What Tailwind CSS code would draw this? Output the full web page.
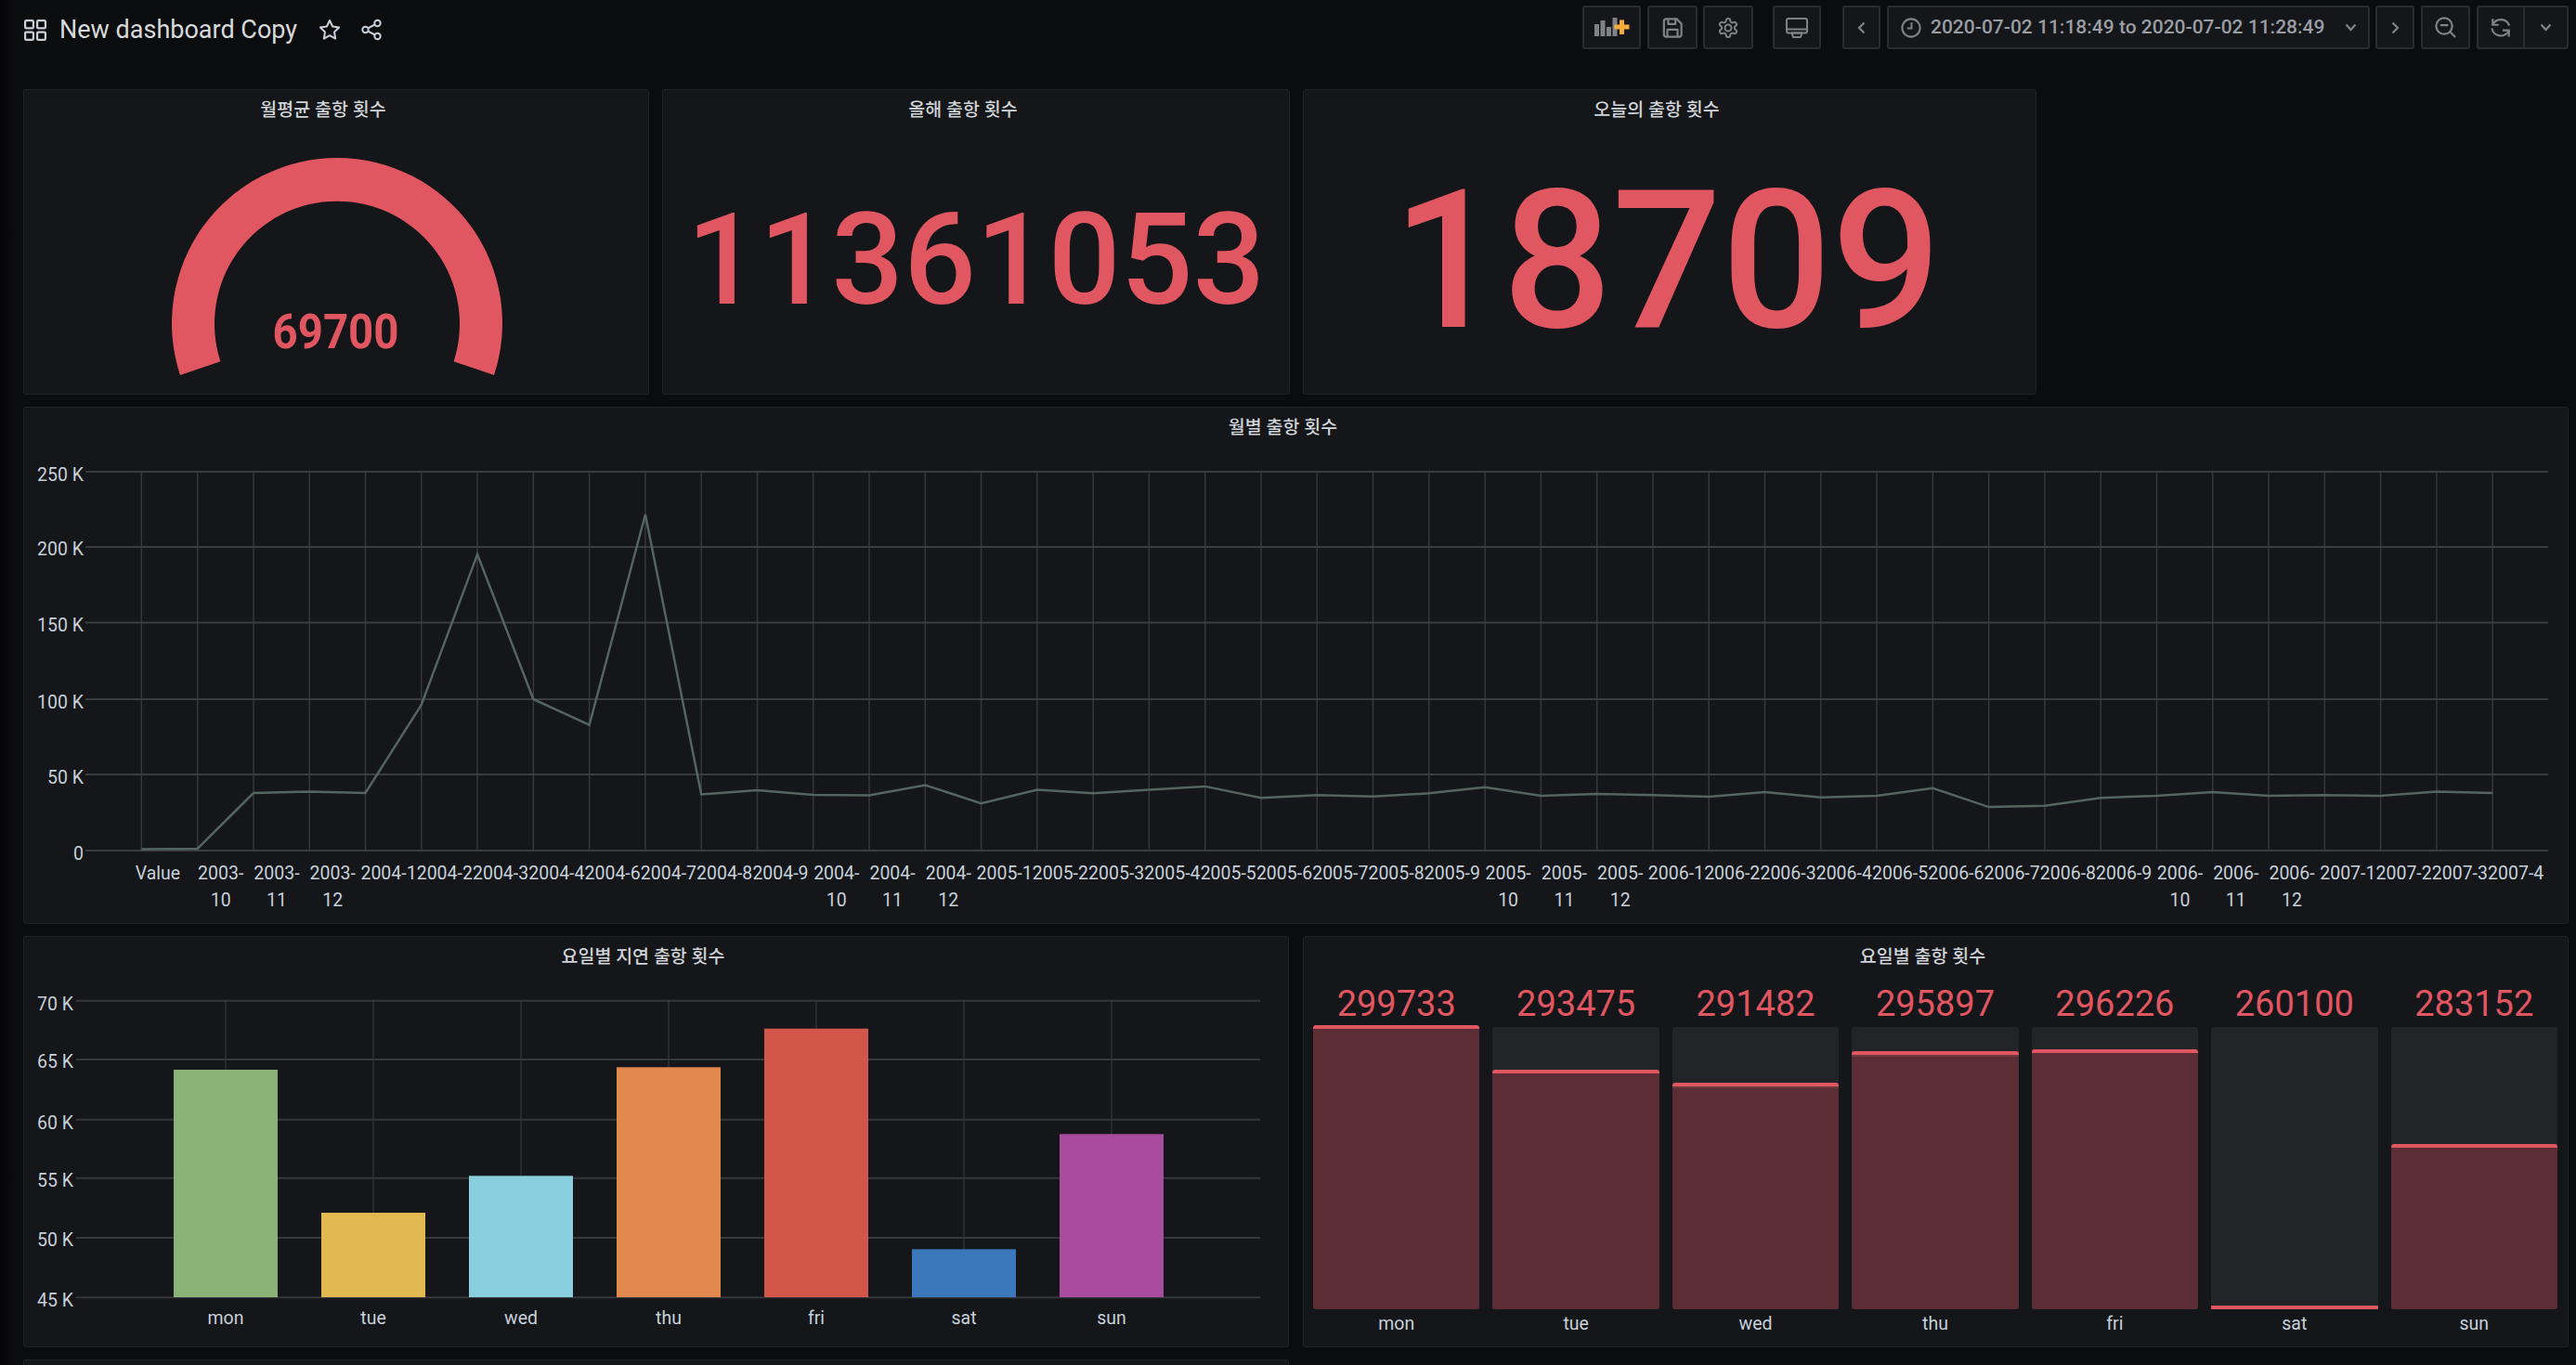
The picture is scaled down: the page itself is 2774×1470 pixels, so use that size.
<!DOCTYPE html>
<html lang="en">
<head>
    <meta charset="UTF-8">
    <title>New dashboard Copy</title>
    <script src="https://cdn.jsdelivr.net/npm/@tailwindcss/browser@4"></script>
</head>
<body class="w-[2774px] h-[1470px] overflow-hidden bg-[linear-gradient(90deg,#030304,#0b0c0e_14px)] font-[Roboto,'Noto_Sans_CJK_KR',sans-serif] text-[#c7d0d9]">

    <!-- Top bar -->
    <header class="h-[96px] pl-[26px] pr-[8px] pt-[6px] flex items-start justify-between">
        <div class="h-[52px] flex items-center">
            <svg class="w-[24px] h-[23px]" viewBox="0 0 24 23" fill="none" stroke="#c7d0d9" stroke-width="2.2">
                <rect x="1.1" y="1.1" width="8.8" height="8.3" rx="1.2"/><rect x="14.1" y="1.1" width="8.8" height="8.3" rx="1.2"/>
                <rect x="1.1" y="13.6" width="8.8" height="8.3" rx="1.2"/><rect x="14.1" y="13.6" width="8.8" height="8.3" rx="1.2"/>
            </svg>
            <span class="ml-[14px] text-[27px] leading-none text-[#d8d9da]">New dashboard Copy</span>
            <svg class="ml-[23px] w-[24px] h-[24px]" viewBox="0 0 24 24" fill="none" stroke="#c7d0d9" stroke-width="2" stroke-linejoin="round">
                <path d="M12 2l3.1 6.5 7 1-5.1 5 1.2 7.1L12 18.2l-6.2 3.4L7 14.5l-5.1-5 7-1z"/>
            </svg>
            <svg class="ml-[21px] w-[24px] h-[24px]" viewBox="0 0 24 24" fill="none" stroke="#c7d0d9" stroke-width="2">
                <circle cx="18.5" cy="5" r="3.2"/><circle cx="5.5" cy="12" r="3.2"/><circle cx="18.5" cy="19" r="3.2"/>
                <path d="M8.4 10.4l7.2-3.9M8.4 13.6l7.2 3.9"/>
            </svg>
        </div>

        <div class="flex items-start h-[47px] text-[#9a9da3]">
            <button class="w-[63px] h-[47px] flex items-center justify-center bg-[#141619] border-2 border-[#2a2c30] rounded-[3px]">
                <svg class="w-[38px] h-[22px]" viewBox="0 0 38 22">
                    <g fill="#7f8388"><rect x="0" y="7" width="5" height="13"/><rect x="6.5" y="3" width="5" height="17"/><rect x="13" y="10" width="5" height="10"/><rect x="19.5" y="0" width="5" height="20"/></g>
                    <path d="M27 2.500h5v5h5.500v5H32v5.500h-5V12.500h-5.500v-5H27z" fill="#f4ab3c"/>
                </svg>
            </button>
            <button class="ml-[7px] w-[54px] h-[47px] flex items-center justify-center bg-[#141619] border-2 border-[#2a2c30] rounded-[3px]">
                <svg class="w-[22px] h-[22px]" viewBox="0 0 24 24" fill="none" stroke="#7f8388" stroke-width="2.400" stroke-linejoin="round">
                    <path d="M4.500 1.500h12.500l5.500 5.500v13a2.500 2.500 0 0 1-2.500 2.500H4.500A2.500 2.500 0 0 1 2 20V4a2.500 2.500 0 0 1 2.500-2.500z"/>
                    <path d="M7 1.500V7.500h8.500V1.500M6 22.500V14h12v8.500"/>
                </svg>
            </button>
            <button class="ml-[6px] w-[54px] h-[47px] flex items-center justify-center bg-[#141619] border-2 border-[#2a2c30] rounded-[3px]">
                <svg class="w-[24px] h-[24px]" viewBox="0 0 24 24" fill="none" stroke="#7f8388" stroke-width="2" stroke-linejoin="round">
                    <path d="M12.220 2h-.44a2 2 0 0 0-2 2v.18a2 2 0 0 1-1 1.730l-.43.25a2 2 0 0 1-2 0l-.15-.08a2 2 0 0 0-2.730.73l-.22.38a2 2 0 0 0 .73 2.730l.15.1a2 2 0 0 1 1 1.720v.51a2 2 0 0 1-1 1.740l-.15.09a2 2 0 0 0-.73 2.730l.22.38a2 2 0 0 0 2.730.73l.15-.08a2 2 0 0 1 2 0l.43.25a2 2 0 0 1 1 1.730V20a2 2 0 0 0 2 2h.44a2 2 0 0 0 2-2v-.18a2 2 0 0 1 1-1.730l.43-.25a2 2 0 0 1 2 0l.15.08a2 2 0 0 0 2.730-.73l.22-.39a2 2 0 0 0-.73-2.730l-.15-.08a2 2 0 0 1-1-1.740v-.5a2 2 0 0 1 1-1.740l.15-.09a2 2 0 0 0 .73-2.730l-.22-.38a2 2 0 0 0-2.730-.73l-.15.08a2 2 0 0 1-2 0l-.43-.25a2 2 0 0 1-1-1.730V4a2 2 0 0 0-2-2z"/>
                    <circle cx="12" cy="12" r="3.500"/>
                </svg>
            </button>
            <button class="ml-[21px] w-[52px] h-[47px] flex items-center justify-center bg-[#141619] border-2 border-[#2a2c30] rounded-[3px]">
                <svg class="w-[24px] h-[22px]" viewBox="0 0 24 22" fill="none" stroke="#7f8388" stroke-width="2" stroke-linejoin="round">
                    <rect x="1" y="1" width="22" height="15.500" rx="2"/><path d="M1 12.500h22M6.500 16.500h11l-1.500 4.500H8z"/>
                </svg>
            </button>
            <button class="ml-[23px] w-[41px] h-[47px] flex items-center justify-center bg-[#141619] border-2 border-[#2a2c30] rounded-[3px]">
                <svg class="w-[9px] h-[14px]" viewBox="0 0 9 14" fill="none" stroke="#7f8388" stroke-width="2.200"><path d="M7.500 1.500L2 7l5.500 5.500"/></svg>
            </button>
            <button class="ml-[7px] w-[520px] h-[47px] flex items-center bg-[#141619] border-2 border-[#2a2c30] rounded-[3px] pl-[13px]">
                <svg class="w-[22px] h-[22px] shrink-0" viewBox="0 0 24 24" fill="none" stroke="#7f8388" stroke-width="2.200"><circle cx="12" cy="12" r="10.500"/><path d="M12.500 5.500V12.500H7.500"/></svg>
                <span class="ml-[10px] text-[21px] font-medium whitespace-nowrap">2020-07-02 11:18:49 to 2020-07-02 11:28:49</span>
                <svg class="ml-[22px] w-[13px] h-[9px] shrink-0" viewBox="0 0 13 9" fill="none" stroke="#7f8388" stroke-width="2.200"><path d="M1.500 1.500L6.500 7l5-5.500"/></svg>
            </button>
            <button class="ml-[6px] w-[42px] h-[47px] flex items-center justify-center bg-[#141619] border-2 border-[#2a2c30] rounded-[3px]">
                <svg class="w-[9px] h-[14px]" viewBox="0 0 9 14" fill="none" stroke="#7f8388" stroke-width="2.200"><path d="M1.500 1.500L7 7l-5.500 5.500"/></svg>
            </button>
            <button class="ml-[7px] w-[53px] h-[47px] flex items-center justify-center bg-[#141619] border-2 border-[#2a2c30] rounded-[3px]">
                <svg class="w-[23px] h-[23px]" viewBox="0 0 24 24" fill="none" stroke="#7f8388" stroke-width="2.300"><circle cx="10.500" cy="10.500" r="9"/><path d="M6 9.500h9M17 17l6 6"/></svg>
            </button>
            <div class="ml-[7px] w-[99px] h-[47px] flex bg-[#141619] border-2 border-[#2a2c30] rounded-[3px]">
                <button class="w-[50px] flex items-center justify-center border-r-2 border-[#2a2c30]">
                    <svg class="w-[22px] h-[23px]" viewBox="0 0 24 24" fill="none" stroke="#7f8388" stroke-width="2.400">
                        <path d="M2.500 2V9H9.500"/><path d="M2.500 9A10.500 10.500 0 0 1 22 10"/><path d="M21.500 23V15.500H14"/><path d="M21.500 15.500A10.500 10.500 0 0 1 1.500 13"/>
                    </svg>
                </button>
                <button class="flex-1 flex items-center justify-center">
                    <svg class="w-[13px] h-[9px]" viewBox="0 0 13 9" fill="none" stroke="#7f8388" stroke-width="2.200"><path d="M1.500 1.500L6.500 7l5-5.500"/></svg>
                </button>
            </div>
        </div>
    </header>

    <main class="pl-[25px] pr-[8px] flex flex-col gap-[13px]">
        <!-- Row 1: gauge and stats -->
        <section class="h-[329px] grid grid-cols-[674px_676px_790px] gap-[14px]">
            <div class="flex flex-col bg-[#141619] border border-[#202226] rounded-[3px]">
                <h2 class="h-[36px] leading-[44px] pr-[28px] text-center text-[19.500px] font-medium text-[#d0d3d7]">월평균 출항 횟수</h2>
                <svg class="w-[672px] h-[291px]" viewBox="26 133 672 291">
                    <path d="M194 404A178 178 0 1 1 532 404L488.600 389.300A132 132 0 1 0 237.400 389.300Z" fill="#e05661"/>
                    <text x="361.500" y="375" text-anchor="middle" font-size="51" font-weight="700" fill="#e05661" textLength="136" lengthAdjust="spacingAndGlyphs">69700</text>
                </svg>
            </div>
            <div class="flex flex-col bg-[#141619] border border-[#202226] rounded-[3px]">
                <h2 class="h-[36px] leading-[44px] pr-[28px] text-center text-[19.500px] font-medium text-[#d0d3d7]">올해 출항 횟수</h2>
                <div class="flex-1 pt-[4px] flex items-center justify-center text-[137px] leading-none font-medium text-[#e05661]">11361053</div>
            </div>
            <div class="flex flex-col bg-[#141619] border border-[#202226] rounded-[3px]">
                <h2 class="h-[36px] leading-[44px] pr-[28px] text-center text-[19.500px] font-medium text-[#d0d3d7]">오늘의 출항 횟수</h2>
                <div class="flex-1 pt-[4px] pr-[6px] flex items-center justify-center text-[208px] leading-none font-medium text-[#e05661]">18709</div>
            </div>
        </section>

        <!-- Row 2: monthly line chart -->
        <section class="h-[557px] flex flex-col bg-[#141619] border border-[#202226] rounded-[3px]">
            <h2 class="h-[36px] leading-[44px] pr-[28px] text-center text-[19.500px] font-medium text-[#d0d3d7]">월별 출항 횟수</h2>
            <svg id="line-chart" class="w-[2739px] h-[519px] text-[19.500px]" viewBox="26 475 2739 519"></svg>
        </section>

        <!-- Row 3: weekday charts -->
        <section class="h-[443px] grid grid-cols-[1363px_1363px] gap-[15px]">
            <div class="flex flex-col bg-[#141619] border border-[#202226] rounded-[3px]">
                <h2 class="h-[36px] leading-[44px] pr-[28px] text-center text-[19.500px] font-medium text-[#d0d3d7]">요일별 지연 출항 횟수</h2>
                <svg id="bar-chart" class="w-[1361px] h-[405px] text-[19.500px]" viewBox="26 1045 1361 405"></svg>
            </div>
            <div class="flex flex-col bg-[#141619] border border-[#202226] rounded-[3px]">
                <h2 class="h-[36px] leading-[44px] pr-[28px] text-center text-[19.500px] font-medium text-[#d0d3d7]">요일별 출항 횟수</h2>
                <div class="pl-[10px] pr-[11px] flex gap-[14px]">
                    <div class="flex-1 flex flex-col items-stretch text-center">
                        <div class="h-[61px] leading-[72px] text-[38px] text-[#e05661]">299733</div>
                        <div class="h-[304px] flex flex-col justify-end bg-[#232428] rounded-[3px]"><div class="shrink-0 bg-[#5c2d34] border-t-4 border-[#e05661] rounded-[3px]" style="height:306px"></div></div>
                        <div class="h-[30px] leading-[32px] text-[19.500px]">mon</div>
                    </div>
                    <div class="flex-1 flex flex-col items-stretch text-center">
                        <div class="h-[61px] leading-[72px] text-[38px] text-[#e05661]">293475</div>
                        <div class="h-[304px] flex flex-col justify-end bg-[#232428] rounded-[3px]"><div class="shrink-0 bg-[#5c2d34] border-t-4 border-[#e05661] rounded-[3px]" style="height:258px"></div></div>
                        <div class="h-[30px] leading-[32px] text-[19.500px]">tue</div>
                    </div>
                    <div class="flex-1 flex flex-col items-stretch text-center">
                        <div class="h-[61px] leading-[72px] text-[38px] text-[#e05661]">291482</div>
                        <div class="h-[304px] flex flex-col justify-end bg-[#232428] rounded-[3px]"><div class="shrink-0 bg-[#5c2d34] border-t-4 border-[#e05661] rounded-[3px] shadow-[inset_0_2px_0_#6d3a40]" style="height:244px"></div></div>
                        <div class="h-[30px] leading-[32px] text-[19.500px]">wed</div>
                    </div>
                    <div class="flex-1 flex flex-col items-stretch text-center">
                        <div class="h-[61px] leading-[72px] text-[38px] text-[#e05661]">295897</div>
                        <div class="h-[304px] flex flex-col justify-end bg-[#232428] rounded-[3px]"><div class="shrink-0 bg-[#5c2d34] border-t-4 border-[#e05661] rounded-[3px] shadow-[inset_0_2px_0_#6d3a40]" style="height:278px"></div></div>
                        <div class="h-[30px] leading-[32px] text-[19.500px]">thu</div>
                    </div>
                    <div class="flex-1 flex flex-col items-stretch text-center">
                        <div class="h-[61px] leading-[72px] text-[38px] text-[#e05661]">296226</div>
                        <div class="h-[304px] flex flex-col justify-end bg-[#232428] rounded-[3px]"><div class="shrink-0 bg-[#5c2d34] border-t-4 border-[#e05661] rounded-[3px]" style="height:280px"></div></div>
                        <div class="h-[30px] leading-[32px] text-[19.500px]">fri</div>
                    </div>
                    <div class="flex-1 flex flex-col items-stretch text-center">
                        <div class="h-[61px] leading-[72px] text-[38px] text-[#e05661]">260100</div>
                        <div class="h-[304px] flex flex-col justify-end bg-[#232428] rounded-[3px]"><div class="shrink-0 bg-[#5c2d34] border-t-4 border-[#e05661] rounded-[1px]" style="height:4px"></div></div>
                        <div class="h-[30px] leading-[32px] text-[19.500px]">sat</div>
                    </div>
                    <div class="flex-1 flex flex-col items-stretch text-center">
                        <div class="h-[61px] leading-[72px] text-[38px] text-[#e05661]">283152</div>
                        <div class="h-[304px] flex flex-col justify-end bg-[#232428] rounded-[3px]"><div class="shrink-0 bg-[#5c2d34] border-t-4 border-[#e05661] rounded-[3px]" style="height:178px"></div></div>
                        <div class="h-[30px] leading-[32px] text-[19.500px]">sun</div>
                    </div>
                </div>
            </div>
        </section>

        <!-- Row 4: only the top edge is on screen -->
        <section class="w-[1363px] h-[40px] bg-[#141619] border border-[#202226] rounded-[3px]"></section>
    </main>

    <script>
        const SVG_NS = 'http://www.w3.org/2000/svg';

        function add(svg, tag, attrs, text) {
            const el = document.createElementNS(SVG_NS, tag);
            for (const key in attrs) el.setAttribute(key, attrs[key]);
            if (text !== undefined) el.textContent = text;
            svg.appendChild(el);
            return el;
        }

        // --- Monthly line chart ---
        const lineChart = document.getElementById('line-chart');
        const months = ['Value', '2003-10', '2003-11', '2003-12', '2004-1', '2004-2', '2004-3', '2004-4', '2004-6', '2004-7', '2004-8', '2004-9', '2004-10', '2004-11', '2004-12',
            '2005-1', '2005-2', '2005-3', '2005-4', '2005-5', '2005-6', '2005-7', '2005-8', '2005-9', '2005-10', '2005-11', '2005-12',
            '2006-1', '2006-2', '2006-3', '2006-4', '2006-5', '2006-6', '2006-7', '2006-8', '2006-9', '2006-10', '2006-11', '2006-12',
            '2007-1', '2007-2', '2007-3', '2007-4'];
        // y pixel of every point, read off the picture
        const linePoints = [914.6, 914, 854, 852.5, 854, 759, 597, 753, 780.7, 554, 855.5, 851, 856, 856.5, 845.5,
            865.1, 850.6, 854.3, 850.6, 846.9, 859.2, 856.2, 857.7, 854.3, 847.7, 856.9, 855.1, 856.2, 858, 852.9,
            858.8, 856.9, 848.8, 869.1, 867.7, 859.2, 856.9, 852.9, 856.9, 856.2, 856.9, 852.5, 854];
        const tickX = (i) => 152.4 + i * 60.28;

        months.forEach((month, i) => {
            add(lineChart, 'line', { x1: tickX(i), x2: tickX(i), y1: 508, y2: 916, stroke: '#36383c', 'stroke-width': 1.5 });
        });
        [[508, '250 K', 511], [589, '200 K', 591], [670.5, '150 K', 673], [753, '100 K', 755.5], [834, '50 K', 837], [916, '0', 919]].forEach(([y, label, labelY]) => {
            add(lineChart, 'line', { x1: 92, x2: 2744, y1: y, y2: y, stroke: '#3a3c40', 'stroke-width': 2 });
            add(lineChart, 'text', { x: 90, y: labelY + 7, 'text-anchor': 'end', fill: '#c7d0d9' }, label);
        });
        add(lineChart, 'polyline', {
            points: linePoints.map((y, i) => tickX(i) + ',' + y).join(' '),
            fill: 'none', stroke: '#54645e', 'stroke-width': 2.5
        });
        months.forEach((month, i) => {
            const x = i === 0 ? 170 : tickX(i) + 25;
            const parts = month.match(/^(\d{4}-)(1[0-2])$/);
            add(lineChart, 'text', { x: x, y: 947, 'text-anchor': 'middle', fill: '#c7d0d9' }, parts ? parts[1] : month);
            if (parts) add(lineChart, 'text', { x: x, y: 976, 'text-anchor': 'middle', fill: '#c7d0d9' }, parts[2]);
        });

        // --- Weekday bar chart ---
        const barChart = document.getElementById('bar-chart');
        [[1077.7, '70 K', 1081], [1141, '65 K', 1143], [1205.7, '60 K', 1209], [1268.7, '55 K', 1271], [1333, '50 K', 1335], [1397.3, '45 K', 1400]].forEach(([y, label, labelY]) => {
            add(barChart, 'line', { x1: 82, x2: 1357, y1: y, y2: y, stroke: '#35373b', 'stroke-width': 2 });
            add(barChart, 'text', { x: 79, y: labelY + 7, 'text-anchor': 'end', fill: '#c7d0d9' }, label);
        });
        [['mon', 1152, '#8ab176'], ['tue', 1306, '#e2b851'], ['wed', 1266.3, '#89cfdd'], ['thu', 1149.3, '#e1884f'], ['fri', 1107.7, '#d2564a'], ['sat', 1345.3, '#3b77bb'], ['sun', 1221.3, '#a94ca0']].forEach(([day, top, color], i) => {
            const center = 243 + i * 159;
            add(barChart, 'line', { x1: center, x2: center, y1: 1077, y2: top, stroke: '#3a3c40', 'stroke-width': 1 });
            add(barChart, 'rect', { x: center - 56, y: top, width: 112, height: 1397 - top, fill: color });
            add(barChart, 'text', { x: center, y: 1426, 'text-anchor': 'middle', fill: '#c7d0d9' }, day);
        });
    </script>
</body>
</html>
